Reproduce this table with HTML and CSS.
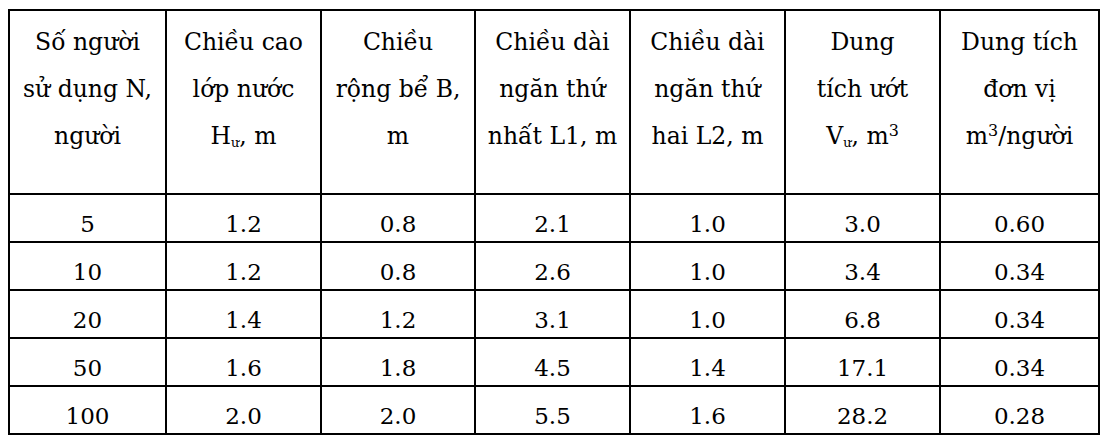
FILE: index.html
```html
<!DOCTYPE html>
<html lang="vi">
<head>
<meta charset="utf-8">
<title>Bảng dung tích bể</title>
<link rel="stylesheet" href="styles.css">
</head>
<body>
<table class="grid">
  <colgroup>
    <col class="c1"><col class="c2"><col class="c3"><col class="c4"><col class="c5"><col class="c6"><col class="c7">
  </colgroup>
  <thead>
    <tr>
      <th>Số người<br>sử dụng N,<br>người</th>
      <th>Chiều cao<br>lớp nước<br>H<sub>ư</sub>, m</th>
      <th>Chiều<br>rộng bể B,<br>m</th>
      <th>Chiều dài<br>ngăn thứ<br>nhất L1, m</th>
      <th>Chiều dài<br>ngăn thứ<br>hai L2, m</th>
      <th>Dung<br>tích ướt<br>V<sub>ư</sub>, m<sup>3</sup></th>
      <th>Dung tích<br>đơn vị<br>m<sup>3</sup>/người</th>
    </tr>
  </thead>
  <tbody>
    <tr><td>5</td><td>1.2</td><td>0.8</td><td>2.1</td><td>1.0</td><td>3.0</td><td>0.60</td></tr>
    <tr><td>10</td><td>1.2</td><td>0.8</td><td>2.6</td><td>1.0</td><td>3.4</td><td>0.34</td></tr>
    <tr><td>20</td><td>1.4</td><td>1.2</td><td>3.1</td><td>1.0</td><td>6.8</td><td>0.34</td></tr>
    <tr><td>50</td><td>1.6</td><td>1.8</td><td>4.5</td><td>1.4</td><td>17.1</td><td>0.34</td></tr>
    <tr><td>100</td><td>2.0</td><td>2.0</td><td>5.5</td><td>1.6</td><td>28.2</td><td>0.28</td></tr>
  </tbody>
</table>
</body>
</html>
```

FILE: styles.css
```css
html, body {
  margin: 0;
  background: #fff;
}
body {
  padding: 9px 0 0 8px;
  font-family: "DejaVu Serif", "Liberation Serif", serif;
  font-size: 24px;
  color: #000;
}
.grid {
  border-collapse: collapse;
  table-layout: fixed;
  width: 1090px;
}
.c1 { width: 157px; }
.c2 { width: 155px; }
.c3 { width: 154px; }
.c4 { width: 155px; }
.c5 { width: 155px; }
.c6 { width: 155px; }
.c7 { width: 159px; }
.grid th,
.grid td {
  border: 2px solid #000;
  text-align: center;
  padding: 0;
}
.grid th {
  font-weight: normal;
  font-size: 23.5px;
  vertical-align: top;
  line-height: 47px;
  height: 184px;
  padding-top: 8px;
  box-sizing: border-box;
}
.grid td {
  font-size: 23px;
  line-height: 29px;
  height: 47px;
  padding: 15px 0 2px;
  vertical-align: bottom;
  box-sizing: border-box;
}
sub, sup {
  line-height: 0;
}
sub {
  font-size: 0.55em;
  vertical-align: -0.2em;
}
sup {
  font-size: 0.68em;
  vertical-align: 0.5em;
}
```
